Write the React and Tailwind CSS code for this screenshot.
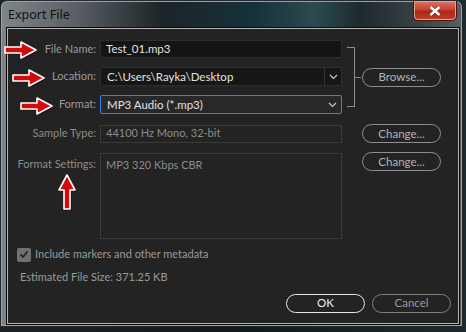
import React from 'react'

const FONT = { fontFamily: 'Lato, "Open Sans", sans-serif' }

function Chevron() {
  return (
    <svg width="9" height="6" viewBox="0 0 9 6" className="shrink-0">
      <polyline points="1,1 4.5,4.5 8,1" fill="none" stroke="#c8c8c8" strokeWidth="1.2" />
    </svg>
  )
}

function RightArrow({ className }) {
  return (
    <svg width="36" height="20" viewBox="0 0 36 20" className={className}>
      <path
        d="M2 7 L18 7 L18 2 L33 10 L18 18 L18 13 L2 13 Z"
        fill="#000"
        opacity="0.45"
        transform="translate(1.5 1.5)"
      />
      <path
        d="M2 7 L18 7 L18 2 L33 10 L18 18 L18 13 L2 13 Z"
        fill="#d10a0a"
        stroke="#fff"
        strokeWidth="1.6"
        strokeLinejoin="round"
      />
    </svg>
  )
}

function UpArrow({ className }) {
  return (
    <svg width="22" height="40" viewBox="0 0 22 40" className={className}>
      <path
        d="M8 37 L8 18 L3 18 L11 3 L19 18 L14 18 L14 37 Z"
        fill="#000"
        opacity="0.45"
        transform="translate(1.5 1.5)"
      />
      <path
        d="M8 37 L8 18 L3 18 L11 3 L19 18 L14 18 L14 37 Z"
        fill="#d10a0a"
        stroke="#fff"
        strokeWidth="1.6"
        strokeLinejoin="round"
      />
    </svg>
  )
}

function PillButton({ children, className = '' }) {
  return (
    <button
      className={`w-[79px] h-[19px] rounded-full border text-[11.5px] leading-none flex items-center justify-center ${className}`}
    >
      {children}
    </button>
  )
}

export default function App() {
  return (
    <div
      className="relative w-[466px] h-[332px] overflow-hidden bg-[linear-gradient(90deg,#1a2328_0%,#0f1a1f_50%,#1c2a30_100%)]"
      style={FONT}
    >
      {/* Window */}
      <div className="w-[463px] h-[327px] rounded-t-[7px] border border-[#24292d] flex flex-col bg-[linear-gradient(90deg,#80858a_0%,#5a6065_16%,#1c2428_35%,#15323a_55%,#2b4b50_68%,#1d2a2e_78%,#3e4448_92%,#5a5f63_100%)] shadow-[inset_0_0_0_1px_#9aa0a5]">
        {/* Title bar */}
        <div className="relative h-[27px] flex items-center pl-[7px]">
          <span
            className="text-[12.5px] text-[#111] pt-[2px]"
            style={{ fontFamily: '"Noto Sans", sans-serif' }}
          >
            Export File
          </span>
          <div className="ml-auto mr-[5px] self-start w-[44px] h-[20px] rounded-b-[5px] border border-[#4a1410] border-t-0 bg-[linear-gradient(180deg,#d9786a_0%,#c8402e_45%,#a8281a_55%,#c0402c_100%)] flex items-center justify-center shadow-[inset_0_0_0_1px_#e8a090]">
            <svg width="12" height="10" viewBox="0 0 12 10">
              <path d="M1.5 1 L10.5 9 M10.5 1 L1.5 9" stroke="#000" strokeWidth="3.6" opacity="0.35" />
              <path d="M1.5 1 L10.5 9 M10.5 1 L1.5 9" stroke="#fff" strokeWidth="2.4" />
            </svg>
          </div>
        </div>

        {/* Panel */}
        <div className="ml-[6px] w-[452px] h-[296px] border border-[#b4b4b4] shadow-[0_0_0_1px_#0a0a0a] bg-[#232323] flex flex-col pt-[11px] text-[11px]">
          {/* Name / Location / Format group */}
          <div className="flex items-center">
            <div className="flex flex-col gap-[9px]">
              <div className="flex items-center h-[18px]">
                <span className="w-[88px] text-right text-[#9a9a9a]">File Name:</span>
                <div className="ml-[4px] w-[242px] h-[18px] bg-[#141414] border border-[#2e2e2e] rounded-[2px] flex items-center pl-[5px] text-[#e2e2e2] text-[11.5px]">
                  Test_01.mp3
                </div>
              </div>
              <div className="flex items-center h-[19px]">
                <span className="w-[88px] text-right text-[#9a9a9a]">Location:</span>
                <div className="ml-[4px] w-[242px] h-[19px] bg-[#161616] border border-[#2e2e2e] rounded-[2px] flex items-center text-[#e2e2e2] text-[11.5px]">
                  <span className="flex-1 pl-[6px]">C:\Users\Rayka\Desktop</span>
                  <span className="w-[17px] h-full border-l border-[#333] flex items-center justify-center">
                    <Chevron />
                  </span>
                </div>
              </div>
              <div className="flex items-center h-[19px]">
                <span className="w-[88px] text-right text-[#9a9a9a]">Format:</span>
                <div className="ml-[4px] w-[242px] h-[19px] bg-[#282828] border border-[#2a86f0] rounded-[2px] flex items-center text-[#e2e2e2] text-[11.5px]">
                  <span className="flex-1 pl-[6px]">MP3 Audio (*.mp3)</span>
                  <span className="w-[17px] flex items-center justify-center">
                    <Chevron />
                  </span>
                </div>
              </div>
            </div>
            {/* Bracket */}
            <div className="ml-[5px] w-[8px] h-[60px] border-t border-r border-b border-[#8c8c8c]" />
            <div className="w-[6px] h-px bg-[#8c8c8c]" />
            <PillButton className="ml-[1px] border-[#8e8e8e] text-[#b4b4b4]">Browse...</PillButton>
          </div>

          {/* Sample Type */}
          <div className="flex items-center mt-[10px] h-[19px]">
            <span className="w-[88px] text-right text-[#8c8c8c]">Sample Type:</span>
            <div className="ml-[4px] w-[242px] h-[18px] border border-[#3a3a3a] flex items-center pl-[5px] text-[#8c8c8c]">
              44100 Hz Mono, 32-bit
            </div>
            <PillButton className="ml-[20px] border-[#8e8e8e] text-[#b4b4b4]">Change...</PillButton>
          </div>

          {/* Format Settings */}
          <div className="flex items-start mt-[10px]">
            <span className="w-[88px] pt-[3px] text-right text-[#8c8c8c]">Format Settings:</span>
            <div className="ml-[4px] w-[242px] h-[86px] border border-[#3a3a3a] pl-[5px] pt-[3px] text-[#8c8c8c]">
              MP3 320 Kbps CBR
            </div>
            <PillButton className="ml-[20px] -mt-[1px] border-[#8e8e8e] text-[#b4b4b4]">Change...</PillButton>
          </div>

          {/* Checkbox */}
          <div className="flex items-center mt-[8px] ml-[9px] h-[15px]">
            <span className="w-[14px] h-[14px] rounded-[2px] bg-[#707070] flex items-center justify-center">
              <svg width="10" height="9" viewBox="0 0 10 9">
                <polyline points="1.5,4.5 4,7 8.5,1.5" fill="none" stroke="#262626" strokeWidth="1.8" />
              </svg>
            </span>
            <span className="ml-[4px] text-[#9a9a9a]">Include markers and other metadata</span>
          </div>

          <div className="mt-[7px] ml-[12px] text-[#9a9a9a]">Estimated File Size: 371.25 KB</div>

          {/* OK / Cancel */}
          <div className="flex justify-end gap-[7px] mt-[8px] pr-[7px]">
            <PillButton className="border-[#e6e6e6] text-[#f0f0f0]">OK</PillButton>
            <PillButton className="border-[#7e7e7e] text-[#9a9a9a]">Cancel</PillButton>
          </div>
        </div>
      </div>

      {/* Annotation arrows */}
      <RightArrow className="absolute left-[3px] top-[40px]" />
      <RightArrow className="absolute left-[11px] top-[68px]" />
      <RightArrow className="absolute left-[19px] top-[96px]" />
      <UpArrow className="absolute left-[56px] top-[172px]" />
    </div>
  )
}
